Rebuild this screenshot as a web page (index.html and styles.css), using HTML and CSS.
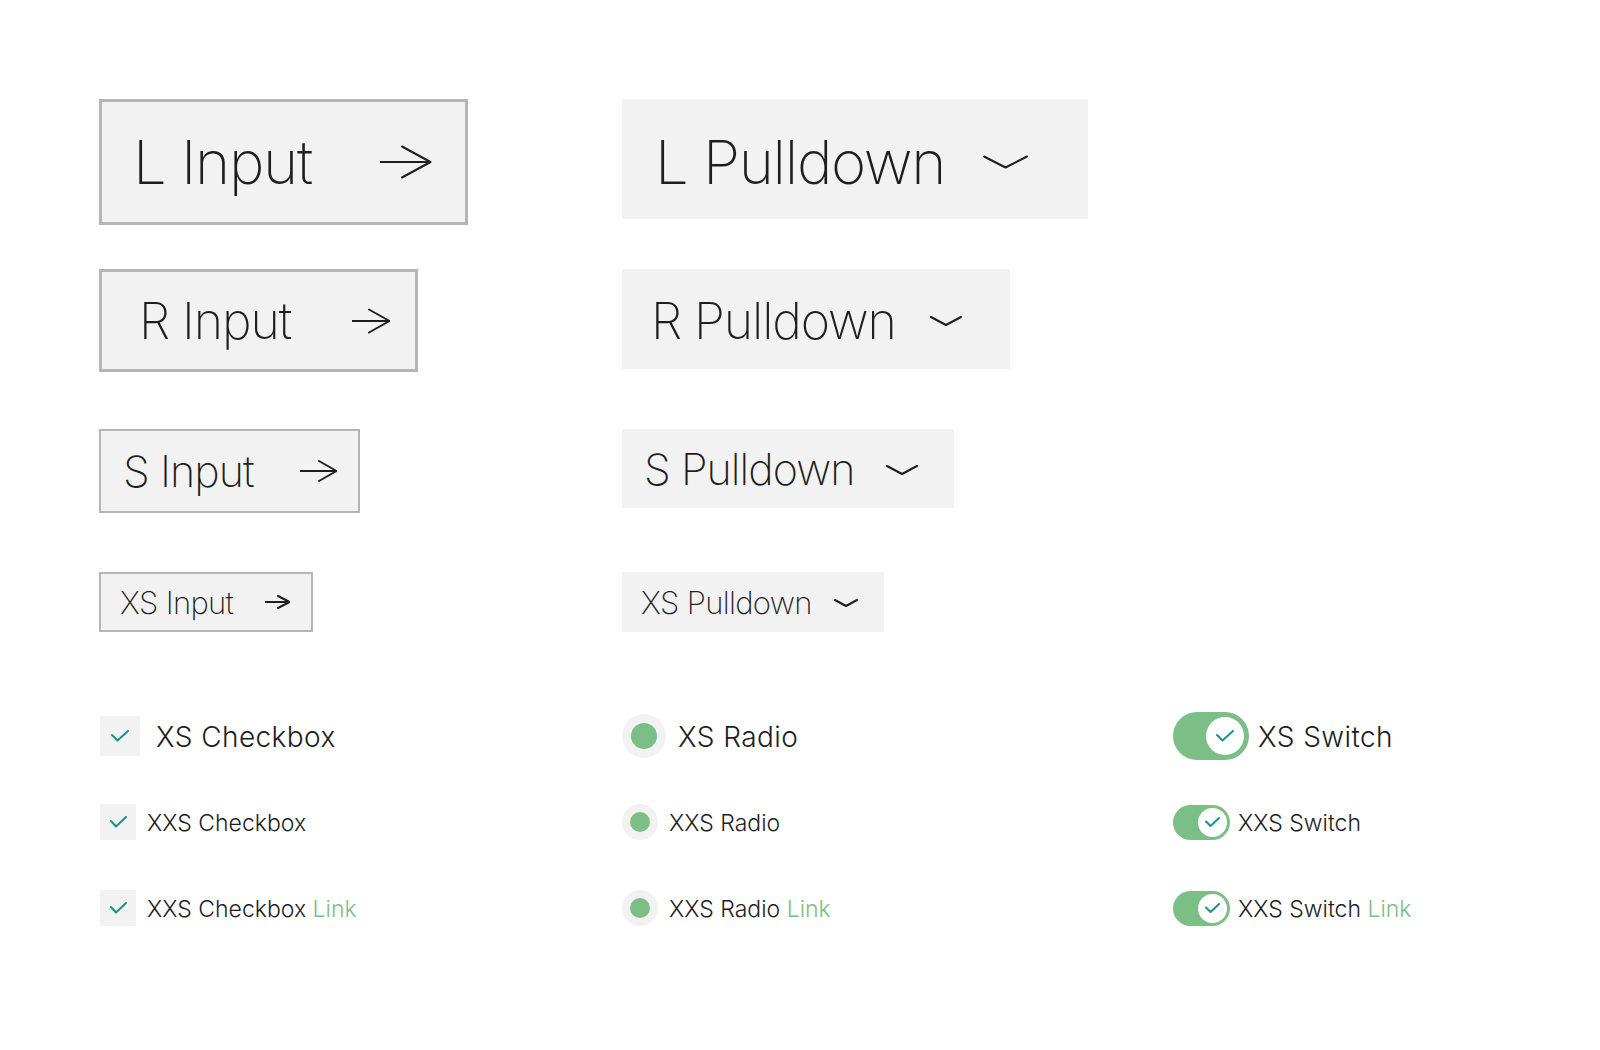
FILE: index.html
```html
<!DOCTYPE html>
<html lang="en">
<head>
<meta charset="utf-8">
<title>Form controls</title>
<link rel="stylesheet" href="styles.css">
</head>
<body>
<main class="page">
  <section class="fields">
    <div class="field-row row-l">
      <div class="input input-l">
        <span class="label">L Input</span>
        <svg class="icon" width="52" height="34" viewBox="0 0 52 34"><path d="M0 17H50M22 1.5L50.5 17L22 32.5"/></svg>
      </div>
      <div class="pulldown pulldown-l">
        <span class="label">L Pulldown</span>
        <svg class="icon" width="45" height="14" viewBox="0 0 45 14"><path d="M1 1.5L22.5 12.5L44 1.5"/></svg>
      </div>
    </div>
    <div class="field-row row-r">
      <div class="input input-r">
        <span class="label">R Input</span>
        <svg class="icon" width="38" height="26" viewBox="0 0 38 26"><path d="M0 13H37M17 1.5L37.5 13L17 24.5"/></svg>
      </div>
      <div class="pulldown pulldown-r">
        <span class="label">R Pulldown</span>
        <svg class="icon" width="32" height="10" viewBox="0 0 32 10"><path d="M1 1L16 9L31 1"/></svg>
      </div>
    </div>
    <div class="field-row row-s">
      <div class="input input-s">
        <span class="label">S Input</span>
        <svg class="icon" width="37" height="22" viewBox="0 0 37 22"><path d="M0 11H36M19 1L36.5 11L19 21"/></svg>
      </div>
      <div class="pulldown pulldown-s">
        <span class="label">S Pulldown</span>
        <svg class="icon" width="32" height="10" viewBox="0 0 32 10"><path d="M1 1L16 9L31 1"/></svg>
      </div>
    </div>
    <div class="field-row row-xs">
      <div class="input input-xs">
        <span class="label">XS Input</span>
        <svg class="icon" width="25" height="14" viewBox="0 0 25 14"><path d="M0 7H24M13 1L24.5 7L13 13"/></svg>
      </div>
      <div class="pulldown pulldown-xs">
        <span class="label">XS Pulldown</span>
        <svg class="icon" width="24" height="8" viewBox="0 0 24 8"><path d="M1 1L12 7L23 1"/></svg>
      </div>
    </div>
  </section>

  <section class="choices">
    <label class="choice choice-xs check-choice">
      <span class="checkbox checkbox-xs"><svg width="18" height="12" viewBox="0 0 18 12"><path d="M1 5L6.5 10.5L17 1"/></svg></span>
      <span class="text">XS Checkbox</span>
    </label>
    <label class="choice choice-xs radio-choice">
      <span class="radio radio-xs"><span class="dot"></span></span>
      <span class="text">XS Radio</span>
    </label>
    <label class="choice choice-xs switch-choice">
      <span class="switch switch-xs"><span class="knob"><svg width="18" height="12" viewBox="0 0 18 12"><path d="M1 5L6.5 10.5L17 1"/></svg></span></span>
      <span class="text">XS Switch</span>
    </label>

    <label class="choice choice-xxs check-choice">
      <span class="checkbox checkbox-xxs"><svg width="17" height="12" viewBox="0 0 17 12"><path d="M1 5L6 10.5L16 1"/></svg></span>
      <span class="text">XXS Checkbox</span>
    </label>
    <label class="choice choice-xxs radio-choice">
      <span class="radio radio-xxs"><span class="dot"></span></span>
      <span class="text">XXS Radio</span>
    </label>
    <label class="choice choice-xxs switch-choice">
      <span class="switch switch-xxs"><span class="knob"><svg width="15" height="10" viewBox="0 0 15 10"><path d="M1 4.5L5.5 9L14 1"/></svg></span></span>
      <span class="text">XXS Switch</span>
    </label>

    <label class="choice choice-xxs check-choice">
      <span class="checkbox checkbox-xxs"><svg width="17" height="12" viewBox="0 0 17 12"><path d="M1 5L6 10.5L16 1"/></svg></span>
      <span class="text">XXS Checkbox <a class="link" href="#">Link</a></span>
    </label>
    <label class="choice choice-xxs radio-choice">
      <span class="radio radio-xxs"><span class="dot"></span></span>
      <span class="text">XXS Radio <a class="link" href="#">Link</a></span>
    </label>
    <label class="choice choice-xxs switch-choice">
      <span class="switch switch-xxs"><span class="knob"><svg width="15" height="10" viewBox="0 0 15 10"><path d="M1 4.5L5.5 9L14 1"/></svg></span></span>
      <span class="text">XXS Switch <a class="link" href="#">Link</a></span>
    </label>
  </section>
</main>
</body>
</html>
```

FILE: styles.css
```css
* { box-sizing: border-box; }

body {
  margin: 0;
  background: #ffffff;
  color: #1e1e1e;
  font-family: Inter, "Noto Sans", sans-serif;
}

.page {
  padding: 99px 0 0 99px;
}

/* ---------- inputs & pulldowns ---------- */
.field-row {
  display: grid;
  grid-template-columns: 523px auto;
  align-items: start;
}
.row-l { margin-bottom: 44px; }
.row-r { margin-bottom: 57px; }
.row-s { margin-bottom: 59px; }

.input,
.pulldown {
  display: flex;
  align-items: center;
  justify-content: space-between;
  background: #f2f2f2;
  font-weight: 200;
  line-height: 1;
  white-space: nowrap;
}

.label {
  letter-spacing: -0.022em;
}

.input {
  border: 3px solid #b5b5b5;
}

.icon {
  display: block;
  flex: none;
  fill: none;
  stroke: #1e1e1e;
  stroke-width: 2;
  stroke-linecap: round;
  stroke-linejoin: round;
}

.input-l {
  width: 369px;
  height: 126px;
  padding: 0 33px 0 31px;
  font-size: 60px;
}
.input-r {
  width: 319px;
  height: 103px;
  padding: 0 25px 0 37px;
  font-size: 50px;
}
.input-s {
  width: 261px;
  height: 84px;
  border-width: 2px;
  padding: 0 21px 0 22px;
  font-size: 43px;
}
.input-xs {
  width: 214px;
  height: 60px;
  border-width: 2px;
  padding: 0 21px 0 19px;
  font-size: 31px;
}

.pulldown-l {
  width: 466px;
  height: 120px;
  padding: 6px 60px 0 33px;
  font-size: 60px;
}
.pulldown-r {
  width: 388px;
  height: 100px;
  padding: 4px 48px 0 29px;
  font-size: 50px;
}
.pulldown-s {
  width: 332px;
  height: 79px;
  padding: 2px 36px 0 22px;
  font-size: 43px;
}
.pulldown-xs {
  width: 262px;
  height: 60px;
  padding: 1px 26px 0 19px;
  font-size: 31px;
}

/* ---------- checkboxes, radios, switches ---------- */
.choices {
  display: grid;
  grid-template-columns: 523px 551px auto;
  grid-template-rows: 48px 48px 48px;
  row-gap: 38px;
  align-items: center;
  margin-top: 80px;
}

.choice {
  display: flex;
  align-items: center;
  white-space: nowrap;
  color: #1e1e1e;
}
.choice-xs { font-size: 28px; }
.choice-xxs { font-size: 23px; }

.check-choice.choice-xs { gap: 16px; }
.radio-choice.choice-xs { gap: 12px; }
.switch-choice.choice-xs { gap: 9px; }
.check-choice.choice-xxs { gap: 11px; }
.radio-choice.choice-xxs { gap: 11px; }
.switch-choice.choice-xxs { gap: 8px; }

.text {
  font-weight: 300;
  line-height: 1;
  padding-top: 2px;
}
.choice-xs .text { letter-spacing: 0.015em; }

.link {
  color: #7cbf86;
  text-decoration: none;
}

.checkbox {
  display: flex;
  align-items: center;
  justify-content: center;
  flex: none;
  margin-left: 1px;
  background: #f2f2f2;
}
.checkbox-xs { width: 40px; height: 40px; }
.checkbox-xxs { width: 36px; height: 36px; }

.checkbox svg,
.knob svg {
  display: block;
  fill: none;
  stroke: #17948c;
  stroke-width: 2;
  stroke-linecap: round;
  stroke-linejoin: round;
}

.radio {
  display: flex;
  align-items: center;
  justify-content: center;
  flex: none;
  border-radius: 50%;
  background: #f2f2f2;
}
.radio .dot {
  display: block;
  border-radius: 50%;
  background: #7cbf86;
}
.radio-xs { width: 44px; height: 44px; }
.radio-xs .dot { width: 26px; height: 26px; }
.radio-xxs { width: 36px; height: 36px; }
.radio-xxs .dot { width: 20px; height: 20px; }

.switch {
  display: flex;
  align-items: center;
  justify-content: flex-end;
  flex: none;
  border-radius: 999px;
  background: #7cbf86;
}
.knob {
  display: flex;
  align-items: center;
  justify-content: center;
  border-radius: 50%;
  background: #ffffff;
}
.switch-xs { width: 76px; height: 48px; padding-right: 5px; }
.switch-xs .knob { width: 38px; height: 38px; }
.switch-xxs { width: 57px; height: 35px; padding-right: 3px; }
.switch-xxs .knob { width: 29px; height: 29px; }
```
